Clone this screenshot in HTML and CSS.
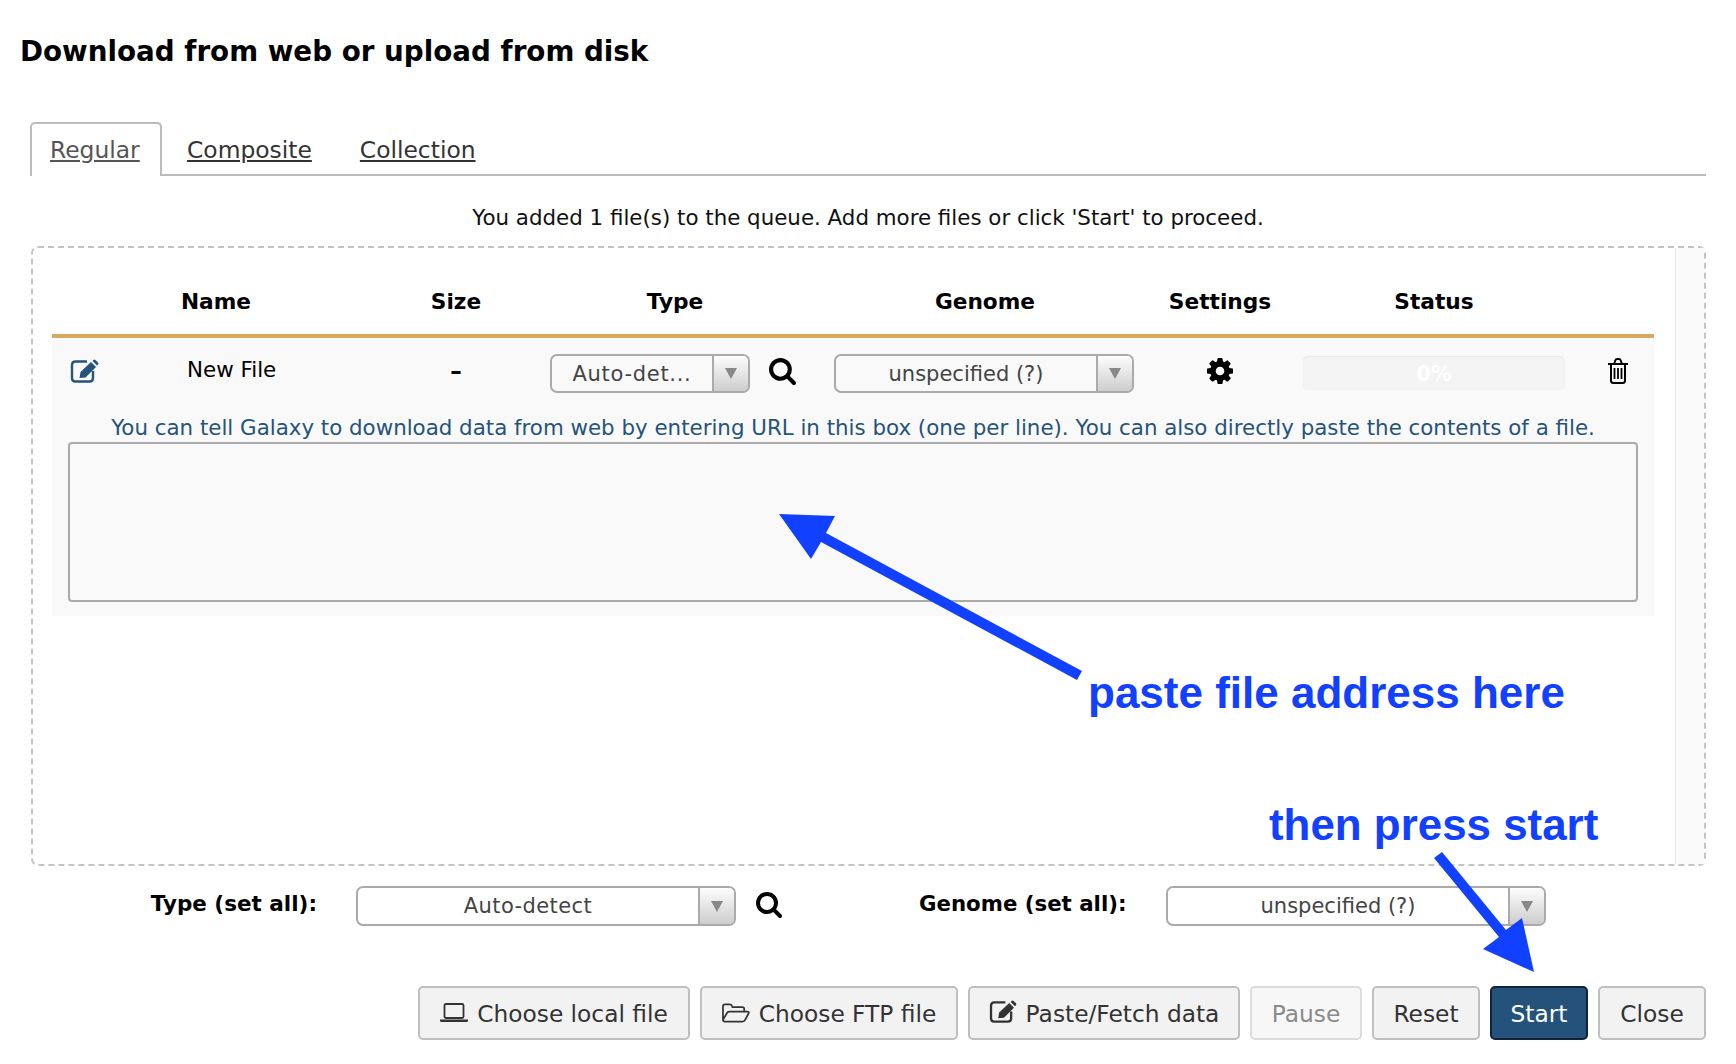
FILE: index.html
```html
<!DOCTYPE html>
<html lang="en">
<head>
  <meta charset="UTF-8">
  <title>Download from web or upload from disk</title>
  <link rel="stylesheet" href="styles.css">
</head>
<body>
  <div class="page">
    <h1 class="title">Download from web or upload from disk</h1>

    <div class="tabs">
      <a class="tab active">Regular</a>
      <a class="tab">Composite</a>
      <a class="tab">Collection</a>
    </div>

    <p class="message">You added 1 file(s) to the queue. Add more files or click 'Start' to proceed.</p>

    <div class="box">
      <div class="box-main">
        <div class="cols head">
          <div>Name</div>
          <div>Size</div>
          <div>Type</div>
          <div>Genome</div>
          <div>Settings</div>
          <div>Status</div>
        </div>
        <div class="file">
          <div class="cols file-row">
            <div class="name-cell">
              <svg class="edit-icon" viewBox="0 0 29 24"><path d="M17 2.500H5.500q-3.500 0-3.500 3.500v13q0 3.500 3.500 3.500h14q3.500 0 3.500-3.500v-7" fill="none" stroke="currentColor" stroke-width="2.400"/><path d="M9.500 19l1-6 10.500-10 5 5-10.500 10.500z" fill="currentColor"/><path d="M22.500 2l1-1q1-1 2 0l2.500 2.500q1 1 0 2l-1 1z" fill="currentColor"/></svg>
              <span class="name">New File</span>
            </div>
            <div class="center dash">–</div>
            <div class="type-cell">
              <div class="select small">
                <span class="select-text dashed">Auto-det...</span>
                <span class="select-arrow"></span>
              </div>
              <svg class="search" viewBox="0 0 1664 1664"><path d="M1152 704q0-185-131.500-316.500t-316.500-131.500-316.500 131.500-131.500 316.500 131.500 316.500 316.500 131.500 316.500-131.500 131.500-316.500zm512 832q0 52-38 90t-90 38q-54 0-90-38l-343-342q-179 124-399 124-143 0-273.500-55.500t-225-150-150-225-55.500-273.500 55.500-273.500 150-225 225-150 273.500-55.500 273.500 55.500 225 150 150 225 55.500 273.500q0 220-124 399l343 343q37 37 37 90z"/></svg>
            </div>
            <div class="genome-cell">
              <div class="select medium">
                <span class="select-text">unspecified (?)</span>
                <span class="select-arrow"></span>
              </div>
            </div>
            <div class="center">
              <svg class="gear" viewBox="0 0 1536 1536"><path d="M1024 768q0-106-75-181t-181-75-181 75-75 181 75 181 181 75 181-75 75-181zm512-109v222q0 12-8 23t-20 13l-185 28q-19 54-39 91 35 50 107 138 10 12 10 25t-9 23q-27 37-99 108t-94 71q-12 0-26-9l-138-108q-44 23-91 38-16 136-29 186-7 28-36 28h-222q-14 0-24.500-8.500t-11.500-21.500l-28-184q-49-16-90-37l-141 107q-10 9-25 9-14 0-25-11-126-114-165-168-7-10-7-23 0-12 8-23 15-21 51-66.500t54-70.500q-27-50-41-99l-183-27q-13-2-21-12.500t-8-23.500v-222q0-12 8-23t19-13l186-28q14-46 39-92-40-57-107-138-10-12-10-24 0-10 9-23 26-36 98.500-107.500t94.500-71.500q13 0 26 10l138 107q44-23 91-38 16-136 29-186 7-28 36-28h222q14 0 24.500 8.500t11.500 21.500l28 184q49 16 90 37l142-107q9-9 24-9 13 0 25 10 129 119 165 170 7 8 7 22 0 12-8 23-15 21-51 66.500t-54 70.500q26 50 41 98l183 28q13 2 21 12.500t8 23.500z"/></svg>
            </div>
            <div class="center">
              <div class="progress">0%</div>
            </div>
            <div class="trash-cell">
              <svg class="trash" viewBox="0 0 22 26"><path d="M1 6h20M4 6v16.500q0 2.500 2.500 2.500h9q2.500 0 2.500-2.500V6M7 6l1.500-4q.4-1 1.500-1h2q1.100 0 1.500 1L15 6" fill="none" stroke="#000" stroke-width="2"/><path d="M7.500 10v11M11 10v11M14.500 10v11" fill="none" stroke="#000" stroke-width="1.800"/></svg>
            </div>
          </div>
          <p class="hint">You can tell Galaxy to download data from web by entering URL in this box (one per line). You can also directly paste the contents of a file.</p>
          <div class="paste-box"></div>
        </div>
      </div>
      <div class="scrollbar"></div>
    </div>

    <div class="set-all">
      <label class="set-label type-label">Type (set all):</label>
      <div class="select wide">
        <span class="select-text dashed">Auto-detect</span>
        <span class="select-arrow"></span>
      </div>
      <svg class="search all" viewBox="0 0 1664 1664"><path d="M1152 704q0-185-131.500-316.500t-316.500-131.500-316.500 131.500-131.500 316.500 131.500 316.500 316.500 131.500 316.500-131.500 131.500-316.500zm512 832q0 52-38 90t-90 38q-54 0-90-38l-343-342q-179 124-399 124-143 0-273.500-55.500t-225-150-150-225-55.500-273.500 55.500-273.500 150-225 225-150 273.500-55.500 273.500 55.500 225 150 150 225 55.500 273.500q0 220-124 399l343 343q37 37 37 90z"/></svg>
      <label class="set-label genome-label">Genome (set all):</label>
      <div class="select wide">
        <span class="select-text">unspecified (?)</span>
        <span class="select-arrow"></span>
      </div>
    </div>

    <div class="buttons">
      <button class="btn btn-local">
        <svg class="btn-icon" viewBox="0 0 28 20"><rect x="4.500" y="1" width="19" height="14" rx="1.500" fill="none" stroke="currentColor" stroke-width="1.800"/><path d="M0 16.500h28v1q0 1.500-1.500 1.500h-25Q0 19 0 17.500z" fill="currentColor"/></svg>
        Choose local file
      </button>
      <button class="btn btn-ftp">
        <svg class="btn-icon" viewBox="0 0 29 20"><path d="M1 17V3q0-2 2-2h5q2 0 2.500 2l.3 1H21q2 0 2 2v2.500M1 17l4.500-7.500q.6-1 2-1H26q2.500 0 1.500 2L24 17q-.8 2-3 2H3q-2 0-2-2z" fill="none" stroke="currentColor" stroke-width="1.800" stroke-linejoin="round"/></svg>
        Choose FTP file
      </button>
      <button class="btn btn-paste">
        <svg class="btn-icon edit" viewBox="0 0 29 24"><path d="M17 2.500H5.500q-3.500 0-3.500 3.500v13q0 3.500 3.500 3.500h14q3.500 0 3.500-3.500v-7" fill="none" stroke="currentColor" stroke-width="2.400"/><path d="M9.500 19l1-6 10.500-10 5 5-10.500 10.500z" fill="currentColor"/><path d="M22.500 2l1-1q1-1 2 0l2.500 2.500q1 1 0 2l-1 1z" fill="currentColor"/></svg>
        Paste/Fetch data
      </button>
      <button class="btn btn-pause">Pause</button>
      <button class="btn btn-reset">Reset</button>
      <button class="btn btn-start">Start</button>
      <button class="btn btn-close">Close</button>
    </div>

    <svg class="arrows" viewBox="0 0 1736 1064">
      <path d="M779 514L835 516 826 533 1082 671 1077 680 821 542 811 559z" fill="#1240ff"/>
      <path d="M1434 858L1442 852 1506 930 1522 918 1534 972 1483 949 1499 937z" fill="#1240ff"/>
    </svg>
    <div class="note note-paste">paste file address here</div>
    <div class="note note-start">then press start</div>
  </div>
</body>
</html>
```

FILE: styles.css
```css
* {
  box-sizing: border-box;
}
html, body {
  margin: 0;
  height: 1064px;
  overflow: hidden;
  background: #fff;
}
body {
  font-family: "DejaVu Sans", sans-serif;
  color: #222;
}
.page {
  position: relative;
  width: 1736px;
  height: 1064px;
  padding: 0 30px;
}
.title {
  margin: 0 0 0 -10px;
  height: 122px;
  padding-top: 32px;
  font-size: 27.750px;
  line-height: 40px;
  font-weight: bold;
  color: #000;
}

/* tabs */
.tabs {
  display: flex;
  height: 54px;
  border-bottom: 2px solid #bbb;
}
.tab {
  height: 54px;
  padding: 0 22px;
  font-size: 23.400px;
  line-height: 52px;
  color: #333;
  text-decoration: underline;
  border: 2px solid transparent;
  border-bottom: 0;
}
.tab.active {
  width: 132px;
  padding: 0 18px;
  margin-right: 1px;
  color: #555;
  background: #fff;
  border-color: #bbb;
  border-radius: 5px 5px 0 0;
}
.message {
  margin: 0;
  height: 70px;
  padding-top: 27px;
  font-size: 21.360px;
  line-height: 30px;
  text-align: center;
  color: #111;
}

/* upload box */
.box {
  display: flex;
  height: 620px;
  margin-left: 1px;
  border: 2px dashed #c4c4c4;
  border-radius: 7px;
}
.box-main {
  flex: 1;
  padding: 0 21px 0 19px;
}
.scrollbar {
  width: 29px;
  background: #fafafa;
  border-left: 1px solid #e6e6e6;
}
.cols {
  display: grid;
  grid-template-columns: 328px 152px 286px 334px 136px 292px 74px;
}
.head {
  height: 90px;
  padding-top: 36px;
  border-bottom: 4px solid #d4aa5f;
  font-size: 21.700px;
  line-height: 36px;
  font-weight: bold;
  color: #000;
  text-align: center;
}
.file {
  height: 278px;
  background: #f9f9f9;
}
.file-row {
  height: 78px;
  padding-top: 16px;
}
.name-cell {
  display: flex;
  padding: 5px 0 0 18px;
  color: #000;
}
.edit-icon {
  flex: none;
  width: 29px;
  height: 24px;
  color: #25537b;
}
.name {
  margin-left: 88px;
  font-size: 21.400px;
  line-height: 22px;
  white-space: nowrap;
}
.center {
  display: flex;
  justify-content: center;
  padding-top: 2px;
  font-size: 21px;
  line-height: 30px;
  color: #000;
}
.center.dash {
  font-size: 23px;
  font-weight: bold;
}
.type-cell {
  display: flex;
  padding-left: 18px;
}
.genome-cell {
  margin-left: -1px;
  padding-left: 17px;
}
.search {
  flex: none;
  width: 27px;
  height: 27px;
  margin: 4px 0 0 19px;
}
.search.all {
  width: 28px;
  height: 26px;
  margin: 6px 0 0 19px;
}
.gear {
  width: 26px;
  height: 26px;
  margin-top: 2px;
}
.progress {
  width: 262px;
  height: 34px;
  background: #f4f4f4;
  border-radius: 5px;
  box-shadow: inset 0 1px 2px #e6e6e6;
  color: #fff;
  font-size: 21px;
  font-weight: bold;
  line-height: 36px;
  text-align: center;
}
.trash-cell {
  padding: 4px 0 0 27px;
}
.trash {
  width: 22px;
  height: 26px;
}
.hint {
  margin: 0;
  height: 26px;
  font-size: 21.370px;
  line-height: 24px;
  text-align: center;
  color: #25537b;
  white-space: nowrap;
}
.paste-box {
  height: 160px;
  margin: 0 16px;
  background: #f9f9f9;
  border: 2px solid #aaa;
  border-radius: 4px;
}

/* select2 style dropdowns */
.select {
  display: flex;
  flex: none;
  height: 39px;
  background: #fff;
  border: 2px solid #aaa;
  border-radius: 7px;
  overflow: hidden;
}
.file .select {
  background: #f9f9f9;
}
.select.small {
  width: 200px;
}
.select.medium {
  width: 300px;
}
.select.wide {
  width: 380px;
  height: 40px;
}
.select-text {
  flex: 1;
  font-size: 21px;
  line-height: 37px;
  text-align: center;
  color: #444;
}
.select-text.dashed {
  letter-spacing: 0.400px;
}
.small .select-text.dashed {
  letter-spacing: 0.700px;
}
.select-arrow {
  display: flex;
  align-items: center;
  justify-content: center;
  width: 36px;
  background: linear-gradient(#fdfdfd, #cdcdcd);
  border-left: 2px solid #aaa;
}
.select-arrow::after {
  content: "";
  border-left: 6px solid transparent;
  border-right: 6px solid transparent;
  border-top: 11px solid #888;
}

/* set all row */
.set-all {
  display: flex;
  margin-top: 20px;
  height: 40px;
}
.set-label {
  font-size: 21.500px;
  font-weight: bold;
  line-height: 35px;
  color: #000;
  white-space: nowrap;
}
.type-label {
  width: 287px;
  margin-right: 39px;
  text-align: right;
}
.genome-label {
  margin-left: 136px;
  width: 207px;
  margin-right: 40px;
  font-size: 21.300px;
  text-align: right;
}

/* bottom buttons */
.buttons {
  display: flex;
  justify-content: flex-end;
  gap: 10px;
  margin-top: 60px;
}
.btn {
  display: flex;
  align-items: center;
  justify-content: center;
  gap: 9px;
  height: 54px;
  padding: 0;
  font-family: inherit;
  font-size: 23.300px;
  color: #333;
  background: #f2f2f2;
  border: 2px solid #bfbfbf;
  border-radius: 5px;
}
.btn-local {
  width: 272px;
}
.btn-ftp {
  width: 258px;
}
.btn-paste {
  width: 272px;
}
.btn-pause {
  width: 112px;
  color: #8a8a8a;
  background: #f7f7f7;
  border-color: #dcdcdc;
}
.btn-reset {
  width: 108px;
}
.btn-start {
  width: 98px;
  color: #fff;
  background: #25527a;
  border-color: #0f2438;
}
.btn-close {
  width: 108px;
}
.btn-icon {
  width: 28px;
  height: 20px;
}
.btn-icon.edit {
  height: 23px;
  margin-top: -4px;
}

/* annotations drawn over the dialog */
.arrows {
  position: absolute;
  left: 0;
  top: 0;
  width: 1736px;
  height: 1064px;
  pointer-events: none;
}
.note {
  position: absolute;
  font-family: "Liberation Sans", Arial, sans-serif;
  font-weight: bold;
  color: #1240ff;
  line-height: 50px;
  white-space: nowrap;
}
.note-paste {
  left: 1088px;
  top: 668px;
  font-size: 44px;
}
.note-start {
  left: 1269px;
  top: 800px;
  font-size: 43.900px;
}
```
